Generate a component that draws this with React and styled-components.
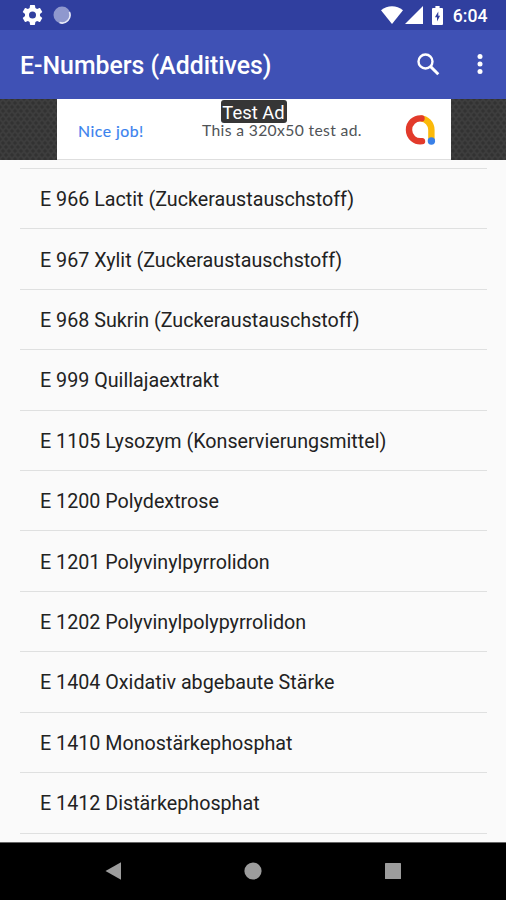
import React from 'react';
import styled, { createGlobalStyle } from 'styled-components';

const GlobalStyle = createGlobalStyle`
  * {
    box-sizing: border-box;
  }

  body {
    margin: 0;
    background: #fafafa;
    font-family: Roboto, "Liberation Sans", sans-serif;
  }

  svg {
    display: block;
    flex-shrink: 0;
  }
`

const Screen = styled.div`
  width: 506px;
  height: 900px;
  display: flex;
  flex-direction: column;
  overflow: hidden;
  background: #fafafa;
`

const StatusBar = styled.div`
  height: 30px;
  flex-shrink: 0;
  display: flex;
  align-items: center;
  padding: 0 18.5px 0 22px;
  background: #303f9f;
  color: #fff;
`

const StatusIcons = styled.div`
  display: flex;
  align-items: center;
  gap: ${props => props.$gap};
  margin-right: ${props => props.$push ? 'auto' : '9.5px'};
`

const Clock = styled.span`
  font-size: 17.6px;
  font-weight: 500;
  line-height: 30px;
  padding-top: 1px;
`

const AppBar = styled.header`
  height: 68.5px;
  flex-shrink: 0;
  display: flex;
  align-items: center;
  padding: 0 23px 0 20px;
  background: #3f51b5;
  color: #fff;
`

const Title = styled.h1`
  margin: 0 auto 0 0;
  padding-top: 3px;
  font-size: 24.85px;
  font-weight: 500;
  line-height: 30px;
  white-space: nowrap;
`

const Actions = styled.div`
  display: flex;
  align-items: center;
  gap: 37px;
`

const AdStrip = styled.div`
  height: 61.5px;
  flex-shrink: 0;
  display: flex;
  justify-content: center;
  background-color: #3d3d3d;
  background-image:
    radial-gradient(circle, #323232 1.3px, transparent 1.9px),
    radial-gradient(circle, #323232 1.3px, transparent 1.9px);
  background-size: 6px 8px;
  background-position: 0 0, 3px 4px;
`

const Ad = styled.div`
  position: relative;
  width: 394px;
  margin-left: 1px;
  display: flex;
  align-items: center;
  padding: 2px 15px 0 21.5px;
  background: #fff;
  border-bottom: 1px solid #dedede;
`

const AdLink = styled.span`
  width: 124px;
  padding-top: 1px;
  font-family: Lato, Roboto, sans-serif;
  font-size: 15.8px;
  letter-spacing: 0.5px;
  color: #3b82ee;
  -webkit-text-stroke: 0.15px #3b82ee;
`

const AdText = styled.span`
  flex: 1;
  padding-top: 1px;
  font-family: Lato, Roboto, sans-serif;
  font-size: 15.7px;
  letter-spacing: 0.35px;
  color: #505357;
  white-space: nowrap;
`

const AdLabel = styled.span`
  position: absolute;
  top: 1px;
  left: 164px;
  width: 66px;
  height: 23px;
  border-radius: 3px;
  background: #363636;
  color: #fff;
  font-size: 18.4px;
  line-height: 25px;
  text-align: center;
  white-space: nowrap;
`

const List = styled.ul`
  flex: 1;
  margin: 0;
  padding: 7.9px 19px 0 20px;
  list-style: none;
  overflow: hidden;
`

const Row = styled.li`
  height: 60.43px;
  display: flex;
  align-items: center;
  padding: 2px 20px 0;
  border-top: 1.5px solid #dfe0e0;
  font-size: 19.72px;
  color: #222;
  white-space: nowrap;

  &:last-child {
    height: 2px;
    padding: 0;
  }
`

const NavBar = styled.nav`
  height: 58.5px;
  flex-shrink: 0;
  display: flex;
  align-items: center;
  justify-content: space-between;
  padding: 0 103px 0.5px;
  background: #000;
  border-top: 1px solid #666;
`

const additives = [
  'E 966 Lactit (Zuckeraustauschstoff)',
  'E 967 Xylit (Zuckeraustauschstoff)',
  'E 968 Sukrin (Zuckeraustauschstoff)',
  'E 999 Quillajaextrakt',
  'E 1105 Lysozym (Konservierungsmittel)',
  'E 1200 Polydextrose',
  'E 1201 Polyvinylpyrrolidon',
  'E 1202 Polyvinylpolypyrrolidon',
  'E 1404 Oxidativ abgebaute Stärke',
  'E 1410 Monostärkephosphat',
  'E 1412 Distärkephosphat',
]

const GearIcon = () => (
  <svg width="21" height="22" viewBox="1.5 1.5 21 21" fill="#fff">
    <path d="M19.43 12.98c.04-.32.07-.64.07-.98s-.03-.66-.07-.98l2.11-1.65c.19-.15.24-.42.12-.64l-2-3.46c-.12-.22-.39-.3-.61-.22l-2.49 1c-.52-.4-1.08-.73-1.69-.98l-.38-2.65A.488.488 0 0 0 14 2h-4c-.25 0-.46.18-.49.42l-.38 2.65c-.61.25-1.17.59-1.69.98l-2.49-1c-.23-.09-.49 0-.61.22l-2 3.46c-.13.22-.07.49.12.64l2.11 1.65c-.04.32-.07.65-.07.98s.03.66.07.98l-2.11 1.65c-.19.15-.24.42-.12.64l2 3.46c.12.22.39.3.61.22l2.49-1c.52.4 1.08.73 1.69.98l.38 2.65c.03.24.24.42.49.42h4c.25 0 .46-.18.49-.42l.38-2.65c.61-.25 1.17-.59 1.69-.98l2.49 1c.23.09.49 0 .61-.22l2-3.46c.12-.22.07-.49-.12-.64l-2.11-1.65zM12 15.5a3.5 3.5 0 1 1 0-7 3.5 3.5 0 0 1 0 7z" />
  </svg>
)

const SyncIcon = () => (
  <svg width="18" height="18" viewBox="0 0 18 18">
    <circle cx="9" cy="9" r="8.5" fill="#8f98ce" />
    <path d="M16.4 6A8 8 0 0 1 6.5 16.6" fill="none" stroke="#e8eaf8" strokeWidth="1.6" />
  </svg>
)

const WifiIcon = () => (
  <svg width="22" height="18" viewBox="0 0 22 18" fill="#fff">
    <path d="M0 4.2C6.4-1 15.6-1 22 4.2L11 18z" />
  </svg>
)

const SignalIcon = () => (
  <svg width="18" height="18" viewBox="0 0 18 18" fill="#fff">
    <path d="M0 18L18 0v18z" />
  </svg>
)

const BatteryIcon = () => (
  <svg width="11" height="19" viewBox="0 0 11 19">
    <path d="M3.4 0h4.2v2H10q1 0 1 1v15q0 1-1 1H1q-1 0-1-1V3q0-1 1-1h2.4z" fill="#fff" />
    <path d="M6.3 5.4L2.9 11.2h2.1v4.3L8.1 9.7H6.3z" fill="#303f9f" />
  </svg>
)

const SearchIcon = () => (
  <svg width="23" height="23" viewBox="0 0 23 23" fill="none" stroke="#fff">
    <circle cx="8.5" cy="8.5" r="7" strokeWidth="2.4" />
    <path d="M13.4 13.4L21.3 21.3" strokeWidth="2.9" />
  </svg>
)

const MoreIcon = () => (
  <svg width="6" height="22" viewBox="0 0 6 22" fill="#fff">
    <circle cx="3" cy="3.4" r="2.5" />
    <circle cx="3" cy="11" r="2.5" />
    <circle cx="3" cy="18.6" r="2.5" />
  </svg>
)

const AdMobLogo = () => (
  <svg width="31" height="32" viewBox="0 0 31 32" fill="none" strokeWidth="6.4">
    <path d="M15.5 4.4A11.4 11.4 0 0 1 26.4 16V26" stroke="#fbb90a" />
    <path d="M17 27.2A11.4 11.4 0 0 1 4 16A11.4 11.4 0 0 1 16.5 4.4" stroke="#e23a2b" strokeLinecap="round" />
    <circle cx="26.4" cy="27" r="3.7" fill="#3980e8" />
  </svg>
)

const App = () => {
  return (
    <>
      <GlobalStyle />
      <Screen>
        <StatusBar>
          <StatusIcons $gap="10px" $push>
            <GearIcon />
            <SyncIcon />
          </StatusIcons>
          <StatusIcons $gap="2px">
            <WifiIcon />
            <SignalIcon />
          </StatusIcons>
          <StatusIcons $gap="0">
            <BatteryIcon />
          </StatusIcons>
          <Clock>6:04</Clock>
        </StatusBar>

        <AppBar>
          <Title>E-Numbers (Additives)</Title>
          <Actions>
            <SearchIcon />
            <MoreIcon />
          </Actions>
        </AppBar>

        <AdStrip>
          <Ad>
            <AdLink>Nice job!</AdLink>
            <AdText>This a 320x50 test ad.</AdText>
            <AdMobLogo />
            <AdLabel>Test Ad</AdLabel>
          </Ad>
        </AdStrip>

        <List>
          {additives.map(name => <Row key={name}>{name}</Row>)}
          <Row />
        </List>

        <NavBar>
          <svg width="20" height="20" viewBox="0 0 20 20" fill="#9c9c9c">
            <path d="M2.5 10L18 1.2v17.6z" />
          </svg>
          <svg width="20" height="20" viewBox="0 0 20 20" fill="#9c9c9c">
            <circle cx="10" cy="10" r="8.6" />
          </svg>
          <svg width="20" height="20" viewBox="0 0 20 20" fill="#9c9c9c">
            <rect x="2" y="2" width="16" height="16" rx="0.5" />
          </svg>
        </NavBar>
      </Screen>
    </>
  )
}

export default App;
